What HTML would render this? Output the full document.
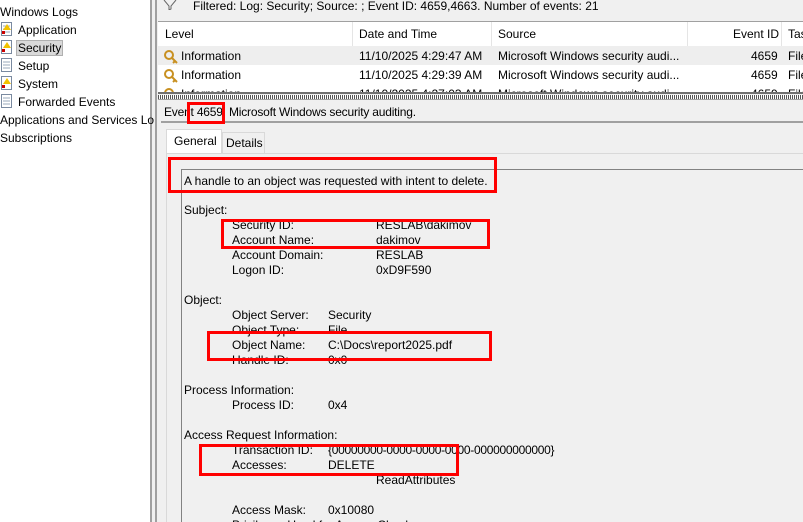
<!DOCTYPE html>
<html style="overflow:hidden;width:803px;height:522px"><head><style>
*{margin:0;padding:0;box-sizing:border-box}
body{width:803px;height:522px;overflow:hidden;background:#f0f0f0;font-family:"Liberation Sans",sans-serif;font-size:12px;color:#000;position:relative}
.a{position:absolute;white-space:nowrap}
.rb{position:absolute;border:3px solid #f00}
</style></head><body>
<div class="a" style="left:0;top:0;width:150px;height:522px;background:#fff"></div>
<div class="a" style="left:150px;top:0;width:2px;height:522px;background:#a0a0a0"></div>
<div class="a" style="left:155px;top:0;width:2px;height:522px;background:#a0a0a0"></div>
<div class="a" style="left:0;top:5px">Windows Logs</div>
<div class="a" style="left:16px;top:40px;width:47px;height:16px;background:#d9d9d9;border:1px solid #b0b0b0"></div>
<svg class="a" style="left:1px;top:22px" width="12" height="90" viewBox="0 0 12 90">
<g fill="#fff" stroke="#7a8aa0"><rect x="0.5" y="0.5" width="10" height="13"/><rect x="0.5" y="18.5" width="10" height="13"/><rect x="0.5" y="36.5" width="10" height="13"/><rect x="0.5" y="54.5" width="10" height="13"/><rect x="0.5" y="72.5" width="10" height="13"/></g>
<g stroke="#9ab" ><path d="M2 4h7M2 7h7M2 10h7M2 40h7M2 43h7M2 46h7M2 76h7M2 79h7M2 82h7"/></g>
<g fill="#f2c200"><path d="M6 2l4 6h-8zM6 20l4 6h-8zM6 56l4 6h-8z"/></g>
<g fill="#c00"><rect x="1" y="9" width="3" height="3"/><rect x="1" y="27" width="3" height="3"/><rect x="1" y="63" width="3" height="3"/></g>
</svg>
<div class="a" style="left:18px;top:23px">Application</div>
<div class="a" style="left:18px;top:41px">Security</div>
<div class="a" style="left:18px;top:59px">Setup</div>
<div class="a" style="left:18px;top:77px">System</div>
<div class="a" style="left:18px;top:95px">Forwarded Events</div>
<div class="a" style="left:0;top:113px">Applications and Services Lo</div>
<div class="a" style="left:0;top:131px">Subscriptions</div>
<svg class="a" style="left:163px;top:0" width="14" height="10"><path d="M1 0l5 6v4l2-1V6l5-6" fill="none" stroke="#666"/></svg>
<div class="a" style="left:193px;top:-1px">Filtered: Log: Security; Source: ; Event ID: 4659,4663. Number of events: 21</div>
<div class="a" style="left:158px;top:21px;width:645px;height:72px;background:#fff;border-top:1px solid #a0a0a0;overflow:hidden">
 <div class="a" style="left:0;top:24px;width:645px;height:19px;background:#eeeeee"></div>
 <div class="a" style="left:194px;top:0;width:1px;height:24px;background:#e5e5e5"></div>
 <div class="a" style="left:333px;top:0;width:1px;height:24px;background:#e5e5e5"></div>
 <div class="a" style="left:529px;top:0;width:1px;height:24px;background:#e5e5e5"></div>
 <div class="a" style="left:623px;top:0;width:1px;height:24px;background:#e5e5e5"></div>
 <div class="a" style="left:7px;top:5px">Level</div>
 <div class="a" style="left:201px;top:5px">Date and Time</div>
 <div class="a" style="left:340px;top:5px">Source</div>
 <div class="a" style="left:575px;top:5px">Event ID</div>
 <div class="a" style="left:630px;top:5px">Tas</div>
 <div class="a" style="left:23px;top:27px">Information</div><div class="a" style="left:201px;top:27px">11/10/2025 4:29:47 AM</div><div class="a" style="left:340px;top:27px">Microsoft Windows security audi...</div><div class="a" style="left:593px;top:27px">4659</div><div class="a" style="left:630px;top:27px">File</div>
 <div class="a" style="left:23px;top:46px">Information</div><div class="a" style="left:201px;top:46px">11/10/2025 4:29:39 AM</div><div class="a" style="left:340px;top:46px">Microsoft Windows security audi...</div><div class="a" style="left:593px;top:46px">4659</div><div class="a" style="left:630px;top:46px">File</div>
 <div class="a" style="left:23px;top:65px">Information</div><div class="a" style="left:201px;top:65px">11/10/2025 4:27:03 AM</div><div class="a" style="left:340px;top:65px">Microsoft Windows security audi...</div><div class="a" style="left:593px;top:65px">4659</div><div class="a" style="left:630px;top:65px">File</div>
 <svg class="a" style="left:5px;top:27px" width="16" height="60"><g fill="none" stroke="#c89020" stroke-width="2"><circle cx="6" cy="6" r="4"/><path d="M9 9l5 5M12 12l-2 2"/><circle cx="6" cy="25" r="4"/><path d="M9 28l5 5M12 31l-2 2"/><circle cx="6" cy="44" r="4"/></g></svg>
</div>
<div class="a" style="left:158px;top:92px;width:645px;height:2px;background:#707070"></div>
<div class="a" style="left:158px;top:95px;width:645px;height:4px;background:repeating-linear-gradient(90deg,#555 0 1px,#fff 1px 2px)"></div>
<div class="a" style="left:158px;top:99px;width:645px;height:1px;background:#a0a0a0"></div>
<div class="a" style="left:164px;top:105px;letter-spacing:-0.2px">Event 4659, Microsoft Windows security auditing.</div>
<div class="a" style="left:161px;top:121px;width:642px;height:2px;background:#a0a0a0"></div>
<div class="a" style="left:166px;top:129px;width:56px;height:25px;background:#fff;border:1px solid #d9d9d9;border-bottom:none"></div>
<div class="a" style="left:222px;top:132px;width:43px;height:21px;background:#f0f0f0;border:1px solid #d9d9d9;border-bottom:none"></div>
<div class="a" style="left:174px;top:134px">General</div>
<div class="a" style="left:226px;top:136px">Details</div>
<div class="a" style="left:166px;top:153px;width:637px;height:369px;border-left:1px solid #d9d9d9;border-top:1px solid #d9d9d9;background:#f0f0f0"></div>
<div class="a" style="left:181px;top:169px;width:622px;height:353px;border-left:1px solid #828282;border-top:1px solid #828282"></div>
<div class="a" style="left:184px;top:174px">A handle to an object was requested with intent to delete.</div>
<div class="a" style="left:184px;top:203px">Subject:</div>
<div class="a" style="left:232px;top:218px">Security ID:</div><div class="a" style="left:376px;top:218px">RESLAB\dakimov</div>
<div class="a" style="left:232px;top:233px">Account Name:</div><div class="a" style="left:376px;top:233px">dakimov</div>
<div class="a" style="left:232px;top:248px">Account Domain:</div><div class="a" style="left:376px;top:248px">RESLAB</div>
<div class="a" style="left:232px;top:263px">Logon ID:</div><div class="a" style="left:376px;top:263px">0xD9F590</div>
<div class="a" style="left:184px;top:293px">Object:</div>
<div class="a" style="left:232px;top:308px">Object Server:</div><div class="a" style="left:328px;top:308px">Security</div>
<div class="a" style="left:232px;top:323px">Object Type:</div><div class="a" style="left:328px;top:323px">File</div>
<div class="a" style="left:232px;top:338px">Object Name:</div><div class="a" style="left:328px;top:338px">C:\Docs\report2025.pdf</div>
<div class="a" style="left:232px;top:353px">Handle ID:</div><div class="a" style="left:328px;top:353px">0x0</div>
<div class="a" style="left:184px;top:383px">Process Information:</div>
<div class="a" style="left:232px;top:398px">Process ID:</div><div class="a" style="left:328px;top:398px">0x4</div>
<div class="a" style="left:184px;top:428px">Access Request Information:</div>
<div class="a" style="left:232px;top:443px">Transaction ID:</div><div class="a" style="left:328px;top:443px;letter-spacing:-0.3px">{00000000-0000-0000-0000-000000000000}</div>
<div class="a" style="left:232px;top:458px">Accesses:</div><div class="a" style="left:328px;top:458px">DELETE</div>
<div class="a" style="left:376px;top:473px">ReadAttributes</div>
<div class="a" style="left:232px;top:503px">Access Mask:</div><div class="a" style="left:328px;top:503px">0x10080</div>
<div class="a" style="left:232px;top:513px;height:9px;overflow:hidden"><div style="margin-top:5px">Privileges Used for Access Check:</div></div>
<div class="rb" style="left:187px;top:102px;width:38px;height:22px"></div>
<div class="rb" style="left:168px;top:157px;width:329px;height:36px"></div>
<div class="rb" style="left:221px;top:219px;width:269px;height:30px"></div>
<div class="rb" style="left:207px;top:331px;width:285px;height:30px"></div>
<div class="rb" style="left:199px;top:444px;width:260px;height:32px"></div>
</body></html>
